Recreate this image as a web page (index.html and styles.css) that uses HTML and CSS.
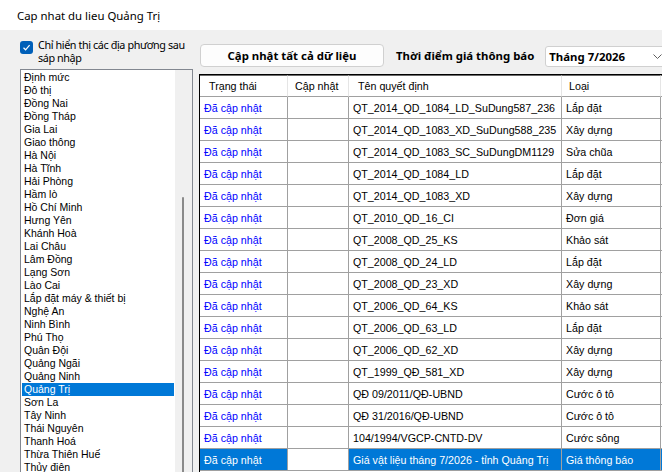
FILE: index.html
```html
<!DOCTYPE html>
<html lang="vi">
<head>
    <meta charset="UTF-8">
    <title>Cap nhat du lieu Quảng Trị</title>
    <link rel="stylesheet" href="styles.css">
</head>
<body>
    <div class="titlebar">Cap nhat du lieu Quảng Trị</div>

    <div class="workspace">
        <aside class="side">
            <label class="check">
                <span class="check-box">
                    <svg width="9" height="9" viewBox="0 0 9 9"><polyline points="1.5,4.8 3.6,6.8 7.6,2.2" fill="none" stroke="#fff" stroke-width="1.2"/></svg>
                </span>
                <span class="check-text">Chỉ hiển thị các địa phương sau sáp nhập</span>
            </label>

            <div class="listbox">
                <ul class="items">
                    <li>Định mức</li>
                    <li>Đô thị</li>
                    <li>Đồng Nai</li>
                    <li>Đồng Tháp</li>
                    <li>Gia Lai</li>
                    <li>Giao thông</li>
                    <li>Hà Nội</li>
                    <li>Hà Tĩnh</li>
                    <li>Hải Phòng</li>
                    <li>Hầm lò</li>
                    <li>Hồ Chí Minh</li>
                    <li>Hưng Yên</li>
                    <li>Khánh Hoà</li>
                    <li>Lai Châu</li>
                    <li>Lâm Đồng</li>
                    <li>Lạng Sơn</li>
                    <li>Lào Cai</li>
                    <li>Lắp đặt máy &amp; thiết bị</li>
                    <li>Nghệ An</li>
                    <li>Ninh Bình</li>
                    <li>Phú Thọ</li>
                    <li>Quân Đội</li>
                    <li>Quảng Ngãi</li>
                    <li>Quảng Ninh</li>
                    <li class="selected">Quảng Trị</li>
                    <li>Sơn La</li>
                    <li>Tây Ninh</li>
                    <li>Thái Nguyên</li>
                    <li>Thanh Hoá</li>
                    <li>Thừa Thiên Huế</li>
                    <li>Thủy điện</li>
                </ul>
                <div class="vscroll"><div class="thumb"></div></div>
            </div>
        </aside>

        <section class="main">
            <div class="toolbar">
                <button class="btn">Cập nhật tất cả dữ liệu</button>
                <span class="label">Thời điểm giá thông báo</span>
                <div class="combo">
                    <span>Tháng 7/2026</span>
                    <svg class="chevron" width="9" height="5" viewBox="0 0 9 5"><polyline points="0.5,0.5 4.5,4.5 8.5,0.5" fill="none" stroke="#5f5f5f" stroke-width="1"/></svg>
                </div>
            </div>

            <div class="grid">
                <table>
                    <colgroup>
                        <col class="c-status">
                        <col class="c-update">
                        <col class="c-name">
                        <col class="c-type">
                        <col class="c-rest">
                    </colgroup>
                    <thead>
                        <tr>
                            <th class="h-status">Trạng thái</th>
                            <th>Cập nhật</th>
                            <th class="h-name">Tên quyết định</th>
                            <th>Loại</th>
                            <th></th>
                        </tr>
                    </thead>
                    <tbody>
                        <tr><td class="status">Đã cập nhật</td><td></td><td>QT_2014_QD_1084_LD_SuDung587_236</td><td>Lắp đặt</td><td></td></tr>
                        <tr><td class="status">Đã cập nhật</td><td></td><td>QT_2014_QD_1083_XD_SuDung588_235</td><td>Xây dựng</td><td></td></tr>
                        <tr><td class="status">Đã cập nhật</td><td></td><td>QT_2014_QD_1083_SC_SuDungDM1129</td><td>Sửa chũa</td><td></td></tr>
                        <tr><td class="status">Đã cập nhật</td><td></td><td>QT_2014_QD_1084_LD</td><td>Lắp đặt</td><td></td></tr>
                        <tr><td class="status">Đã cập nhật</td><td></td><td>QT_2014_QD_1083_XD</td><td>Xây dựng</td><td></td></tr>
                        <tr><td class="status">Đã cập nhật</td><td></td><td>QT_2010_QD_16_CI</td><td>Đơn giá</td><td></td></tr>
                        <tr><td class="status">Đã cập nhật</td><td></td><td>QT_2008_QD_25_KS</td><td>Khảo sát</td><td></td></tr>
                        <tr><td class="status">Đã cập nhật</td><td></td><td>QT_2008_QD_24_LD</td><td>Lắp đặt</td><td></td></tr>
                        <tr><td class="status">Đã cập nhật</td><td></td><td>QT_2008_QD_23_XD</td><td>Xây dựng</td><td></td></tr>
                        <tr><td class="status">Đã cập nhật</td><td></td><td>QT_2006_QD_64_KS</td><td>Khảo sát</td><td></td></tr>
                        <tr><td class="status">Đã cập nhật</td><td></td><td>QT_2006_QD_63_LD</td><td>Lắp đặt</td><td></td></tr>
                        <tr><td class="status">Đã cập nhật</td><td></td><td>QT_2006_QD_62_XD</td><td>Xây dựng</td><td></td></tr>
                        <tr><td class="status">Đã cập nhật</td><td></td><td>QT_1999_QĐ_581_XD</td><td>Xây dựng</td><td></td></tr>
                        <tr><td class="status">Đã cập nhật</td><td></td><td>QĐ 09/2011/QĐ-UBND</td><td>Cước ô tô</td><td></td></tr>
                        <tr><td class="status">Đã cập nhật</td><td></td><td>QĐ 31/2016/QĐ-UBND</td><td>Cước ô tô</td><td></td></tr>
                        <tr><td class="status">Đã cập nhật</td><td></td><td>104/1994/VGCP-CNTD-DV</td><td>Cước sông</td><td></td></tr>
                        <tr class="selected"><td class="status">Đã cập nhật</td><td class="check-cell"></td><td>Giá vật liệu tháng 7/2026 - tỉnh Quảng Trị</td><td>Giá thông báo</td><td></td></tr>
                    </tbody>
                </table>
            </div>
        </section>
    </div>
</body>
</html>
```

FILE: styles.css
```css
* {
    margin: 0;
    padding: 0;
    box-sizing: border-box;
}

body {
    width: 662px;
    height: 472px;
    overflow: hidden;
    font-family: "Noto Sans", "DejaVu Sans", sans-serif;
    font-size: 11.4px;
    color: #000;
    background: #f0f0f0;
}

.titlebar {
    height: 30px;
    line-height: 32px;
    padding-left: 17px;
    background: #fff;
}

.workspace {
    display: flex;
    height: 442px;
    overflow: hidden;
}

/* left column */
.side {
    width: 199px;
    flex-shrink: 0;
    padding: 10px 0 0 20px;
}

.check {
    display: flex;
    align-items: flex-start;
    gap: 5px;
    height: 29px;
}

.check-box {
    width: 13px;
    height: 13px;
    margin-top: 1px;
    border-radius: 3px;
    background: #005fb8;
    display: flex;
    align-items: center;
    justify-content: center;
    flex-shrink: 0;
}

.check-text {
    font-size: 10.8px;
    letter-spacing: -0.4px;
    line-height: 13px;
    margin-top: -2px;
}

.listbox {
    width: 173px;
    height: 420px;
    border: 1px solid #828790;
    background: #fff;
    display: flex;
}

.items {
    list-style: none;
    flex: 1;
    padding: 1px;
    font-family: "Liberation Sans", Arial, sans-serif;
    font-size: 10.5px;
}

.items li {
    height: 13px;
    line-height: 13px;
    padding-left: 2px;
    white-space: nowrap;
}

.items li.selected {
    background: #0078d7;
    color: #fff;
}

.vscroll {
    width: 17px;
    background: #f0f0f0;
    padding-top: 127px;
}

.thumb {
    width: 2px;
    height: 300px;
    margin-left: 7px;
    border-radius: 1px;
    background: #8a8a8a;
}

/* right column */
.main {
    flex: 1;
    min-width: 0;
    display: flex;
    flex-direction: column;
}

.toolbar {
    display: flex;
    align-items: center;
    height: 44px;
    padding: 14px 0 7px 1px;
    overflow: hidden;
}

.toolbar > * {
    flex-shrink: 0;
}

.btn {
    width: 184px;
    height: 23px;
    border: 1px solid #d0d0d0;
    border-radius: 4px;
    background: #fdfdfd;
    font-family: inherit;
    font-size: 11.4px;
    font-weight: bold;
    color: #000;
}

.label {
    margin-left: 12px;
    font-weight: bold;
    white-space: nowrap;
}

.combo {
    margin-left: 11px;
    margin-top: 2px;
    width: 130px;
    height: 21px;
    border: 1px solid #d0d0d0;
    border-radius: 3px;
    background: #fff;
    display: flex;
    align-items: center;
    padding-left: 3px;
    font-weight: bold;
}

.chevron {
    margin-left: auto;
    margin-right: 12px;
}

/* data grid */
.grid {
    flex: 1;
    overflow: hidden;
    border-top: 1px solid #000;
    border-left: 1px solid #000;
    background: #fff;
}

.grid table {
    width: 502px;
    table-layout: fixed;
    border-collapse: separate;
    border-spacing: 0;
    font-family: "Liberation Sans", Arial, sans-serif;
    font-size: 10.7px;
}

.c-status { width: 88px; }
.c-update { width: 61px; }
.c-name { width: 213px; }
.c-type { width: 99px; }
.c-rest { width: 41px; }

.grid th,
.grid td {
    height: 22px;
    border-right: 1px solid #a0a0a0;
    border-bottom: 1px solid #a0a0a0;
    padding: 0 4px;
    text-align: left;
    font-weight: normal;
    white-space: nowrap;
    overflow: hidden;
}

.grid th {
    border-top: 1px solid #696969;
    border-right-color: #e5e5e5;
    padding-left: 7px;
}

.grid th.h-status,
.grid th.h-name {
    padding-left: 9px;
}

.grid td.status {
    color: #0000ff;
}

.grid tr.selected td {
    background: #0078d7;
    color: #fff;
}

.grid tr.selected td.check-cell {
    background: #fff;
}
```
